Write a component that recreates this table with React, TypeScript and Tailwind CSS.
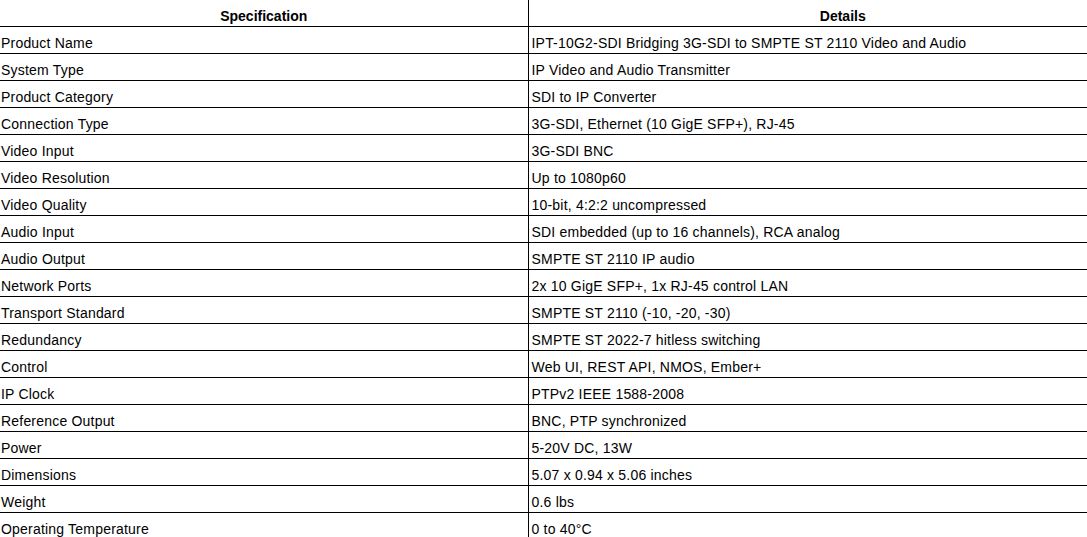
import React from "react"

const specs: [string, string][] = [
  ["Product Name", "IPT-10G2-SDI Bridging 3G-SDI to SMPTE ST 2110 Video and Audio"],
  ["System Type", "IP Video and Audio Transmitter"],
  ["Product Category", "SDI to IP Converter"],
  ["Connection Type", "3G-SDI, Ethernet (10 GigE SFP+), RJ-45"],
  ["Video Input", "3G-SDI BNC"],
  ["Video Resolution", "Up to 1080p60"],
  ["Video Quality", "10-bit, 4:2:2 uncompressed"],
  ["Audio Input", "SDI embedded (up to 16 channels), RCA analog"],
  ["Audio Output", "SMPTE ST 2110 IP audio"],
  ["Network Ports", "2x 10 GigE SFP+, 1x RJ-45 control LAN"],
  ["Transport Standard", "SMPTE ST 2110 (-10, -20, -30)"],
  ["Redundancy", "SMPTE ST 2022-7 hitless switching"],
  ["Control", "Web UI, REST API, NMOS, Ember+"],
  ["IP Clock", "PTPv2 IEEE 1588-2008"],
  ["Reference Output", "BNC, PTP synchronized"],
  ["Power", "5-20V DC, 13W"],
  ["Dimensions", "5.07 x 0.94 x 5.06 inches"],
  ["Weight", "0.6 lbs"],
  ["Operating Temperature", "0 to 40°C"],
]

const App = () => {
  return (
    <div className="w-full h-[537px] overflow-hidden bg-white">
      <table
        className="w-[1155px] border-collapse text-black text-[14px] leading-[16px] table-fixed"
        style={{ fontFamily: '"Liberation Sans", Arial, sans-serif' }}
      >
        <colgroup>
          <col className="w-[528px]" />
          <col className="w-[627px]" />
        </colgroup>
        <thead>
          <tr>
            <th className="font-bold text-center pt-[8px] pb-[2px] px-0 border-b border-black">
              Specification
            </th>
            <th className="font-bold text-center pt-[8px] pb-[2px] pl-[2px] border-b border-l border-black">
              Details
            </th>
          </tr>
        </thead>
        <tbody>
          {specs.map(([label, value]) => (
            <tr key={label}>
              <td className="text-left font-normal tracking-[0.2px] pt-[8px] pb-[2px] pl-px pr-0 border-b border-black whitespace-nowrap">
                {label}
              </td>
              <td className="text-left font-normal tracking-[0.2px] pt-[8px] pb-[2px] pl-[3px] border-b border-l border-black whitespace-nowrap">
                {value}
              </td>
            </tr>
          ))}
        </tbody>
      </table>
    </div>
  )
}

export default App
